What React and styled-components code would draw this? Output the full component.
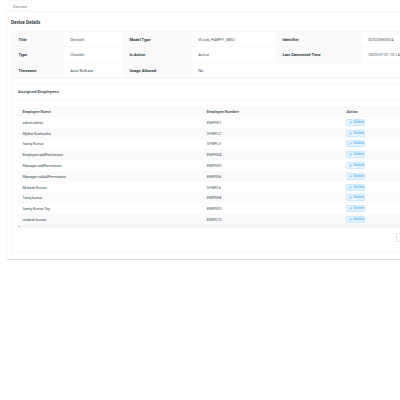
import React from 'react'
import styled, {createGlobalStyle} from 'styled-components';

const employees = [
    {name: "admin admin", number: "EMP001"},
    {name: "Mylkor Kushwaha", number: "SYNPL2"},
    {name: "Sanity Kumar", number: "SYNPL3"},
    {name: "Employee addPermission", number: "EMP004"},
    {name: "Manager addPermission", number: "EMP005"},
    {name: "Manager noAddPermission", number: "EMP006"},
    {name: "Mukesh Kumar", number: "SYNPL6"},
    {name: "Tanuj kumar", number: "EMP008"},
    {name: "Sanity Kumar Tay", number: "EMP009"},
    {name: "mukesh kumar", number: "EMP010"},
];

function DeleteIcon() {
    return (
        <svg width="3" height="3" viewBox="0 0 12 12" fill="none" stroke="#1890ff" strokeWidth="1.3">
            <path d="M1 11 L5 7 M3 4 L8 9 M4 5 L7 1 L11 5 L7 8"/>
        </svg>
    );
}

function App() {
  return (
    <Page>
        <GlobalStyle/>
        <Tab>Devices</Tab>
        <Card>
            <Title>Device Details</Title>
            <Details>
                <Label>Title</Label>
                <Value>Device5</Value>
                <Label>Model Type</Label>
                <Value>VLock_HARPY_3802</Value>
                <Label>Identifier</Label>
                <Value>D2020060024</Value>
                <Label>Type</Label>
                <Value>CheckIn</Value>
                <Label>Is Active</Label>
                <Value>Active</Value>
                <Label>Last Connected Time</Label>
                <Value>2020-07-01 15:14</Value>
                <Label>Timezone</Label>
                <Value>Asia/Kolkata</Value>
                <Label>Image Allowed</Label>
                <Value $span={3}>No</Value>
            </Details>
            <Panel>
                <PanelTitle>Assigned Employees</PanelTitle>
                <Table>
                    <Row $head>
                        <span>Employee Name</span>
                        <span>Employee Number</span>
                        <span>Action</span>
                    </Row>
                    {employees.map((employee,i)=>(
                        <Row key={employee.number} $striped={i % 2 === 1}>
                            <Name>{employee.name}</Name>
                            <span>{employee.number}</span>
                            <Button><DeleteIcon/>Delete</Button>
                        </Row>
                    ))}
                    <ScrollBar>
                        <svg width="2" height="3" viewBox="0 0 2 3" fill="#aaa"><path d="M2 0.5 V2.5 L0.5 1.5 Z"/></svg>
                    </ScrollBar>
                </Table>
                <Pager>
                    <PageButton>
                        <svg width="3" height="4" viewBox="0 0 3 4" fill="none" stroke="#bbb" strokeWidth="0.5"><path d="M2.5 0.5 L1 2 L2.5 3.5"/></svg>
                    </PageButton>
                </Pager>
            </Panel>
        </Card>
    </Page>
  );
}

const GlobalStyle = createGlobalStyle`
    * {
        box-sizing: border-box;
    }
    body {
        margin: 0;
        background: white;
        overflow: hidden;
    }
`
const Page = styled.div`
    width: 400px;
    height: 400px;
    overflow: hidden;
    font-family: Roboto, "Noto Sans", sans-serif;
    font-size: 4px;
    line-height: 5px;
    color: #43525c;
    white-space: nowrap;
`
const Tab = styled.div`
    width: 24px;
    height: 11px;
    margin-left: 8px;
    padding: 3px 0 0 4px;
    background: #fefefe;
    border: 1px solid #f8f8f8;
    border-bottom: none;
    color: #7d8388;
`
const Card = styled.div`
    width: 420px;
    height: 249px;
    margin-left: 6px;
    padding: 8px 0 0 4px;
    border: 1px solid #f5f5f5;
    border-bottom-color: #dedede;
`
const Title = styled.div`
    height: 11px;
    font-size: 4.6px;
    font-weight: 700;
    color: #303b42;
`
const Details = styled.div`
    display: grid;
    grid-template-columns: 52px 59px 69px 84px 86.3px 60px;
    grid-template-rows: 15.4px 15.4px 15.4px;
    border: 1px solid #f8f8f8;
    border-right: none;
`
const Label = styled.div`
    padding: 5px 0 0 6.5px;
    background: #fafafa;
    border-bottom: 1px solid #f6f6f6;
    font-weight: 700;
    color: #29343a;
`
const Value = styled.div`
    grid-column: span ${props => props.$span || 1};
    padding: 5px 0 0 6.2px;
    border-bottom: 1px solid #f8f8f8;
`
const Panel = styled.div`
    height: 170px;
    margin-top: 4px;
    border: 1px solid #f8f8f8;
    border-right: none;
`
const PanelTitle = styled.div`
    height: 16px;
    padding: 5px 0 0 6px;
    border-bottom: 1px solid #f6f6f6;
    font-size: 4.4px;
    font-weight: 600;
    color: #46525a;
`
const Table = styled.div`
    margin: 6px 0 0 6px;
`
const Row = styled.div`
    display: grid;
    grid-template-columns: 184.3px 139.7px 60px;
    align-items: center;
    height: 10.8px;
    padding-left: 4.5px;
    background: ${props => props.$head || props.$striped ? "#fafafa" : "white"};
    font-size: 3.9px;
    font-weight: ${props => props.$head ? 600 : 400};
    color: ${props => props.$head ? "#46525a" : "#43525c"};
`
const Name = styled.span`
    letter-spacing: -0.16px;
`
const Button = styled.button`
    display: flex;
    align-items: center;
    gap: 1px;
    width: 19px;
    height: 7px;
    padding: 0 0 0 2px;
    background: #e3f4ff;
    border: 1px solid #cde9ff;
    border-radius: 1px;
    font-family: inherit;
    font-size: 3.7px;
    line-height: 5px;
    color: #3c9df5;
`
const ScrollBar = styled.div`
    display: flex;
    height: 3px;
    background: #f4f4f4;
`
const Pager = styled.div`
    display: flex;
    padding: 5px 0 0 384px;
`
const PageButton = styled.div`
    display: flex;
    align-items: center;
    width: 9px;
    height: 9px;
    padding-left: 2px;
    border: 1px solid #e4e4e4;
    border-radius: 1px;
`

export default App
